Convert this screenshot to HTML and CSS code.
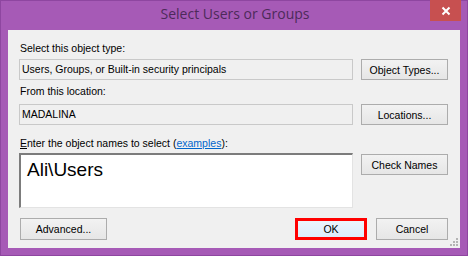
FILE: index.html
```html
<!DOCTYPE html>
<html lang="en">
<head>
  <meta charset="UTF-8">
  <meta name="viewport" content="width=device-width, initial-scale=1.0">
  <title>Select Users or Groups</title>
  <link rel="stylesheet" href="styles.css">
</head>
<body>
  <div class="window">
    <div class="titlebar">
      <span class="title">Select Users or Groups</span>
      <span class="close-btn">
        <svg width="10" height="10" viewBox="0 0 10 10">
          <path d="M1.5 1.5 L8.5 8.5 M8.5 1.5 L1.5 8.5" stroke="#fff" stroke-width="2"/>
        </svg>
      </span>
    </div>

    <div class="client">
      <div class="label label-type">Select this object type:</div>
      <div class="row">
        <div class="field">Users, Groups, or Built-in security principals</div>
        <button class="btn">Object Types...</button>
      </div>

      <div class="label label-loc">From this location:</div>
      <div class="row">
        <div class="field">MADALINA</div>
        <button class="btn">Locations...</button>
      </div>

      <div class="label label-names"><u>E</u>nter the object names to select (<a href="#">examples</a>):</div>
      <div class="row row-names">
        <div class="names">Ali\Users</div>
        <button class="btn btn-check">Check Names</button>
      </div>

      <div class="footer">
        <button class="btn btn-advanced">Advanced...</button>
        <div class="spacer"></div>
        <button class="btn btn-ok">OK</button>
        <button class="btn btn-cancel">Cancel</button>
      </div>

      <svg class="grip" width="8" height="8" viewBox="0 0 8 8">
        <rect x="6" y="0" width="2" height="2" fill="#b4b4b4"/>
        <rect x="3" y="3" width="2" height="2" fill="#b4b4b4"/>
        <rect x="6" y="3" width="2" height="2" fill="#b4b4b4"/>
        <rect x="0" y="6" width="2" height="2" fill="#b4b4b4"/>
        <rect x="3" y="6" width="2" height="2" fill="#b4b4b4"/>
        <rect x="6" y="6" width="2" height="2" fill="#b4b4b4"/>
      </svg>
    </div>
  </div>
</body>
</html>
```

FILE: styles.css
```css
:root {
  --frame-purple: #a65ab6;
  --frame-edge: #8e46a0;
  --dialog-gray: #f0f0f0;
  --button-border: #acacac;
  --close-red: #c75050;
}

body {
  margin: 0;
  background-color: var(--frame-purple);
  font-family: "Liberation Sans", Arial, sans-serif;
  font-size: 10.5px;
  color: #000;
}

.window {
  width: 468px;
  height: 256px;
  box-sizing: border-box;
  padding: 0 7px 7px 7px;
  background-color: var(--frame-purple);
  border: 1px solid var(--frame-edge);
}

/* title bar */
.titlebar {
  position: relative;
  height: 29px;
  display: flex;
  justify-content: center;
}

.title {
  font-family: "Open Sans", "Noto Sans", sans-serif;
  font-size: 14px;
  line-height: 26px;
  color: #4d2a5a;
  margin-left: 2px;
}

.close-btn {
  position: absolute;
  top: -1px;
  right: -1px;
  width: 31px;
  height: 21px;
  background-color: var(--close-red);
  display: flex;
  align-items: center;
  justify-content: center;
}

/* dialog body */
.client {
  position: relative;
  height: 218px;
  box-sizing: border-box;
  background-color: var(--dialog-gray);
  padding: 12px 12px 0 11px;
}

.label {
  line-height: 13px;
  height: 13px;
  padding-left: 1px;
  white-space: nowrap;
}

.label-type {
  margin-bottom: 4px;
}

.label-loc {
  margin-top: 5px;
  margin-bottom: 6px;
}

.label-names {
  margin-top: 12px;
  margin-bottom: 3px;
}

.label-names a {
  color: #0066cc;
}

.row {
  display: flex;
  gap: 8px;
}

.field {
  flex: 1;
  height: 21px;
  box-sizing: border-box;
  border: 1px solid #c9c9c9;
  background-color: var(--dialog-gray);
  padding-left: 2px;
  line-height: 19px;
  white-space: nowrap;
}

.btn {
  width: 87px;
  height: 21px;
  box-sizing: border-box;
  border: 1px solid var(--button-border);
  background: linear-gradient(#f2f2f2, #e6e6e6);
  font-family: "Liberation Sans", Arial, sans-serif;
  font-size: 10.5px;
  color: #000;
  padding: 0;
  margin: 0;
}

.names {
  flex: 1;
  height: 55px;
  box-sizing: border-box;
  background-color: #fff;
  border-top: 2px solid #7c7c7c;
  border-left: 2px solid #7c7c7c;
  border-right: 1px solid #e3e3e3;
  border-bottom: 1px solid #e3e3e3;
  padding: 4px 0 0 6px;
  font-family: "Liberation Sans", Arial, sans-serif;
  font-size: 19px;
  line-height: 22px;
}

.btn-check {
  margin-top: 1px;
}

.footer {
  display: flex;
  gap: 9px;
  margin-top: 10px;
}

.btn-advanced {
  margin-left: 1px;
  height: 22px;
}

.spacer {
  flex: 1;
}

.btn-ok,
.btn-cancel {
  width: 72px;
  height: 22px;
}

.btn-ok {
  border: 3px solid #ff0000;
  background: linear-gradient(#ecf4fc, #dcecfc);
}

.grip {
  position: absolute;
  right: 2px;
  bottom: 2px;
}
```
